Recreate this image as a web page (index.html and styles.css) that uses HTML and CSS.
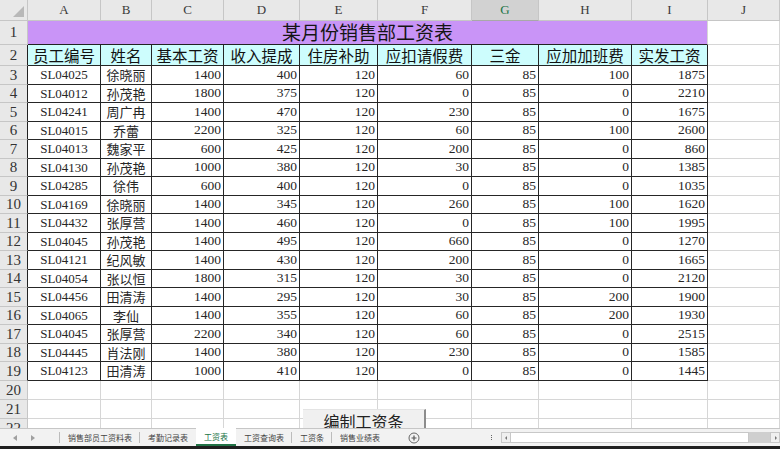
FILE: index.html
```html
<!DOCTYPE html>
<html lang="zh-CN">
<head>
<meta charset="utf-8">
<title>工资表</title>
<link rel="stylesheet" href="styles.css">
</head>
<body>
<div class="app">
  <div class="sheet">
    <div class="row hdr"><b class="corner"></b><b>A</b><b>B</b><b>C</b><b>D</b><b>E</b><b>F</b><b class="sel">G</b><b>H</b><b>I</b><b>J</b></div>
    <div class="row r1"><b class="rh">1</b><span class="title">某月份销售部工资表</span><span></span></div>
    <div class="row r2 t"><b class="rh">2</b><span class="hd">员工编号</span><span class="hd">姓名</span><span class="hd">基本工资</span><span class="hd">收入提成</span><span class="hd">住房补助</span><span class="hd">应扣请假费</span><span class="hd">三金</span><span class="hd">应加加班费</span><span class="hd">实发工资</span><span></span></div>
    <div class="row t"><b class="rh">3</b><span class="c">SL04025</span><span class="c cj">徐晓丽</span><span class="n">1400</span><span class="n">400</span><span class="n">120</span><span class="n">60</span><span class="n">85</span><span class="n">100</span><span class="n">1875</span><span></span></div>
    <div class="row t s"><b class="rh">4</b><span class="c">SL04012</span><span class="c cj">孙茂艳</span><span class="n">1800</span><span class="n">375</span><span class="n">120</span><span class="n">0</span><span class="n">85</span><span class="n">0</span><span class="n">2210</span><span></span></div>
    <div class="row t"><b class="rh">5</b><span class="c">SL04241</span><span class="c cj">周广冉</span><span class="n">1400</span><span class="n">470</span><span class="n">120</span><span class="n">230</span><span class="n">85</span><span class="n">0</span><span class="n">1675</span><span></span></div>
    <div class="row t s"><b class="rh">6</b><span class="c">SL04015</span><span class="c cj">乔蕾</span><span class="n">2200</span><span class="n">325</span><span class="n">120</span><span class="n">60</span><span class="n">85</span><span class="n">100</span><span class="n">2600</span><span></span></div>
    <div class="row t"><b class="rh">7</b><span class="c">SL04013</span><span class="c cj">魏家平</span><span class="n">600</span><span class="n">425</span><span class="n">120</span><span class="n">200</span><span class="n">85</span><span class="n">0</span><span class="n">860</span><span></span></div>
    <div class="row t s"><b class="rh">8</b><span class="c">SL04130</span><span class="c cj">孙茂艳</span><span class="n">1000</span><span class="n">380</span><span class="n">120</span><span class="n">30</span><span class="n">85</span><span class="n">0</span><span class="n">1385</span><span></span></div>
    <div class="row t"><b class="rh">9</b><span class="c">SL04285</span><span class="c cj">徐伟</span><span class="n">600</span><span class="n">400</span><span class="n">120</span><span class="n">0</span><span class="n">85</span><span class="n">0</span><span class="n">1035</span><span></span></div>
    <div class="row t s"><b class="rh">10</b><span class="c">SL04169</span><span class="c cj">徐晓丽</span><span class="n">1400</span><span class="n">345</span><span class="n">120</span><span class="n">260</span><span class="n">85</span><span class="n">100</span><span class="n">1620</span><span></span></div>
    <div class="row t"><b class="rh">11</b><span class="c">SL04432</span><span class="c cj">张厚营</span><span class="n">1400</span><span class="n">460</span><span class="n">120</span><span class="n">0</span><span class="n">85</span><span class="n">100</span><span class="n">1995</span><span></span></div>
    <div class="row t s"><b class="rh">12</b><span class="c">SL04045</span><span class="c cj">孙茂艳</span><span class="n">1400</span><span class="n">495</span><span class="n">120</span><span class="n">660</span><span class="n">85</span><span class="n">0</span><span class="n">1270</span><span></span></div>
    <div class="row t"><b class="rh">13</b><span class="c">SL04121</span><span class="c cj">纪风敏</span><span class="n">1400</span><span class="n">430</span><span class="n">120</span><span class="n">200</span><span class="n">85</span><span class="n">0</span><span class="n">1665</span><span></span></div>
    <div class="row t s"><b class="rh">14</b><span class="c">SL04054</span><span class="c cj">张以恒</span><span class="n">1800</span><span class="n">315</span><span class="n">120</span><span class="n">30</span><span class="n">85</span><span class="n">0</span><span class="n">2120</span><span></span></div>
    <div class="row t"><b class="rh">15</b><span class="c">SL04456</span><span class="c cj">田清涛</span><span class="n">1400</span><span class="n">295</span><span class="n">120</span><span class="n">30</span><span class="n">85</span><span class="n">200</span><span class="n">1900</span><span></span></div>
    <div class="row t s"><b class="rh">16</b><span class="c">SL04065</span><span class="c cj">李仙</span><span class="n">1400</span><span class="n">355</span><span class="n">120</span><span class="n">60</span><span class="n">85</span><span class="n">200</span><span class="n">1930</span><span></span></div>
    <div class="row t"><b class="rh">17</b><span class="c">SL04045</span><span class="c cj">张厚营</span><span class="n">2200</span><span class="n">340</span><span class="n">120</span><span class="n">60</span><span class="n">85</span><span class="n">0</span><span class="n">2515</span><span></span></div>
    <div class="row t s"><b class="rh">18</b><span class="c">SL04445</span><span class="c cj">肖法刚</span><span class="n">1400</span><span class="n">380</span><span class="n">120</span><span class="n">230</span><span class="n">85</span><span class="n">0</span><span class="n">1585</span><span></span></div>
    <div class="row t"><b class="rh">19</b><span class="c">SL04123</span><span class="c cj">田清涛</span><span class="n">1000</span><span class="n">410</span><span class="n">120</span><span class="n">0</span><span class="n">85</span><span class="n">0</span><span class="n">1445</span><span></span></div>
    <div class="row"><b class="rh">20</b><span></span><span></span><span></span><span></span><span></span><span></span><span></span><span></span><span></span><span></span></div>
    <div class="row"><b class="rh">21</b><span></span><span></span><span></span><span></span><span></span><span></span><span></span><span></span><span></span><span></span></div>
    <div class="row"><b class="rh">22</b><span></span><span></span><span></span><span></span><span></span><span></span><span></span><span></span><span></span><span></span></div>
    <div class="btn">编制工资条</div>
  </div>
  <div class="tabbar">
    <div class="nav"><span class="arr l"></span><span class="arr r"></span></div>
    <div class="tab">销售部员工资料表</div>
    <div class="tab">考勤记录表</div>
    <div class="tab active">工资表</div>
    <div class="tab">工资查询表</div>
    <div class="tab">工资条</div>
    <div class="tab">销售业绩表</div>
    <div class="add"><svg width="12" height="12" viewBox="0 0 12 12"><circle cx="6" cy="6" r="5" fill="none" stroke="#666" stroke-width="1"/><path d="M3.5 6h5M6 3.5v5" stroke="#555" stroke-width="1.2"/></svg></div>
    <div class="dots"><i></i><i></i><i></i></div>
    <div class="hscroll"><span class="sb-l"></span><span class="thumb"></span><span class="track"></span><span class="sb-r"></span></div>
  </div>
  <div class="taskbar"></div>
</div>
</body>
</html>
```

FILE: styles.css
```css
html, body {
  margin: 0;
  padding: 0;
  background: #fff;
}
.app {
  width: 780px;
  height: 449px;
  overflow: hidden;
  display: flex;
  flex-direction: column;
}
.sheet {
  position: relative;
  height: 428px;
  overflow: hidden;
  flex: none;
}
.row {
  display: grid;
  grid-template-columns: 28px 73px 51px 72px 76px 78px 94px 67px 93px 76px 1fr;
  height: 19px;
}
.row.s { height: 18px; }
.row > * {
  box-sizing: border-box;
  border-right: 1px solid #d6d6d6;
  border-bottom: 1px solid #d6d6d6;
  display: flex;
  align-items: center;
  white-space: nowrap;
  font-weight: normal;
  color: #262626;
}
.hdr { height: 21px; }
.hdr > * {
  background: #e8e8e8;
  border-color: #c6c6c6;
  justify-content: center;
  font: 13px/1.2 "Liberation Serif", serif;
  color: #3a3a3a;
}
.hdr > .sel {
  background: #d2d2d2;
  color: #217346;
  border-bottom: 1px solid #a8a8a8;
}
.corner { position: relative; }
.corner::after {
  content: "";
  position: absolute;
  right: 3px;
  bottom: 3px;
  width: 0;
  height: 0;
  border-style: solid;
  border-width: 0 0 11px 11px;
  border-color: transparent transparent #b8b8b8 transparent;
}
.rh {
  background: #e8e8e8;
  border-color: #c6c6c6 !important;
  justify-content: center;
  font: 15px/1.1 "Liberation Serif", serif;
  color: #333 !important;
}
.r1 { height: 24px; }
.r1 > .title {
  grid-column: span 9;
  background: #c994f7;
  justify-content: center;
  font: 19px/1.2 "Noto Sans CJK SC", sans-serif;
  color: #151515;
  border-bottom-color: #222;
  border-right-color: #d6d6d6;
}
.r2 { height: 21px; }
.hd {
  background: #cdfdfd;
  justify-content: center;
  font: 15.5px/1.2 "Noto Sans CJK SC", sans-serif;
  color: #111 !important;
}
.t > .rh { border-right-color: #222 !important; }
.t > span:not(:last-child) {
  border-right-color: #262626;
  border-bottom-color: #262626;
}
.c {
  justify-content: center;
  font: 13px/1.2 "Liberation Serif", serif;
}
.cj {
  font: 13px/1.2 "Noto Sans CJK SC", sans-serif;
}
.n {
  justify-content: flex-end;
  padding-right: 2px;
  font: 13.5px/1.2 "Liberation Serif", serif;
}
.btn {
  position: absolute;
  left: 303px;
  top: 409px;
  width: 123px;
  height: 30px;
  box-sizing: border-box;
  background: #f0f0f0;
  border-right: 2px solid #8c8c8c;
  border-top: 1px solid #e4e4e4;
  text-align: center;
  padding-top: 3px;
  font: 16px/16px "Noto Sans CJK SC", sans-serif;
  color: #222;
}
.tabbar {
  height: 18px;
  box-sizing: border-box;
  border-top: 1px solid #c6c6c6;
  background: #f2f2f2;
  display: flex;
  align-items: stretch;
  flex: none;
}
.nav {
  width: 60px;
  display: flex;
  align-items: center;
  gap: 14px;
  padding-left: 13px;
  box-sizing: border-box;
  border-right: 1px solid #bcbcbc;
  margin: 3px 0;
}
.arr {
  width: 0;
  height: 0;
  border-style: solid;
}
.arr.l { border-width: 3px 4px 3px 0; border-color: transparent #a0a0a0 transparent transparent; }
.arr.r { border-width: 3px 0 3px 4px; border-color: transparent transparent transparent #a0a0a0; }
.tab {
  position: relative;
  padding: 0 8px;
  font: 8px/17px "Noto Sans CJK SC", sans-serif;
  color: #444;
  white-space: nowrap;
}
.tab + .tab::before {
  content: "";
  position: absolute;
  left: -1px;
  top: 3px;
  bottom: 3px;
  border-left: 1px solid #bcbcbc;
}
.tab:last-of-type::after {
  content: "";
  position: absolute;
  right: -1px;
  top: 3px;
  bottom: 3px;
  border-left: 1px solid #bcbcbc;
}
.tab.active {
  background: #fff;
  color: #217346;
  box-shadow: inset 0 -2px 0 #217346;
  margin-top: -1px;
}
.tab.active + .tab::before, .tab.active::before { display: none; }
.add {
  width: 12px;
  display: flex;
  align-items: center;
  margin-left: 20px;
}
.dots {
  margin-left: 70px;
  width: 3px;
  display: flex;
  flex-direction: column;
  justify-content: center;
  gap: 1px;
}
.dots i {
  display: block;
  width: 1px;
  height: 1px;
  background: #666;
  margin-left: 1px;
}
.hscroll {
  flex: 1;
  margin-left: 8px;
  display: flex;
  align-items: stretch;
  margin-top: 3px;
  margin-bottom: 3px;
}
.sb-l, .sb-r {
  width: 10px;
  position: relative;
  background: #f0f0f0;
  border: 1px solid #c8c8c8;
  box-sizing: border-box;
}
.sb-l::after, .sb-r::after {
  content: "";
  position: absolute;
  top: 3px;
  border-style: solid;
}
.sb-l::after { left: 3px; border-width: 2px 2px 2px 0; border-color: transparent #777 transparent transparent; }
.sb-r::after { left: 4px; border-width: 2px 0 2px 2px; border-color: transparent transparent transparent #777; }
.thumb {
  width: 238px;
  background: #fff;
  border: 1px solid #c8c8c8;
  border-left: none;
  box-sizing: border-box;
}
.track {
  flex: 1;
  background: #cfcfcf;
}
.taskbar {
  height: 3px;
  background: #1f1f1f;
  flex: none;
}
```
